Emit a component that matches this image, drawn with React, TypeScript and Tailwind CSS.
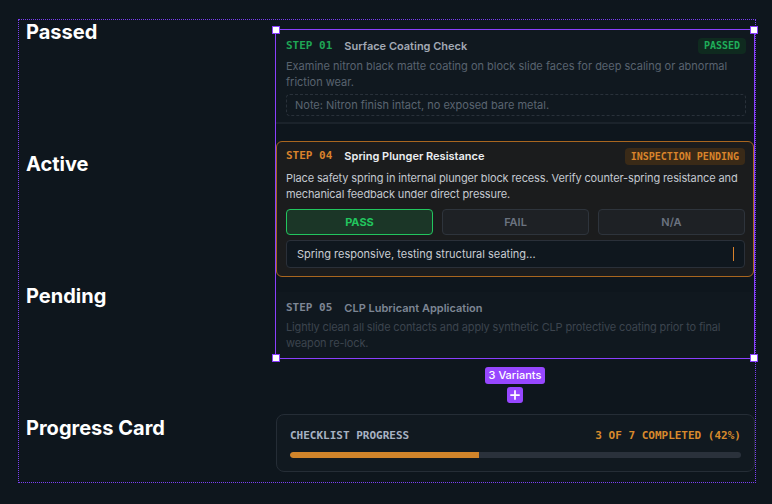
import { Plus } from "lucide-react"

const sans = "font-['Inter',sans-serif]"
const mono = "font-['DejaVu_Sans_Mono',monospace]"

function Handle({ className }: { className: string }) {
  return <span className={`absolute w-[8px] h-[8px] bg-white border border-[#8a3ffc] ${className}`} />
}

function PassedStep() {
  return (
    <div className="pl-2.5 pr-2 pt-2 pb-[6px] border-b-2 border-[#1b232b] bg-[#10181f]">
      <div className="h-4 flex items-center">
        <span className={`${mono} text-[11px] font-bold text-[#1fa655]`}>STEP 01</span>
        <span className="ml-3 text-[11px] font-semibold text-[#a3aab5]">Surface Coating Check</span>
        <span className={`ml-auto ${mono} text-[10px] font-bold text-[#1fae5a] bg-[#0f2a1f] rounded px-1.5 leading-4`}>
          PASSED
        </span>
      </div>
      <p className="mt-1 text-[11px] leading-4 text-[#59636f]">
        Examine nitron black matte coating on block slide faces for deep scaling or abnormal friction wear.
      </p>
      <div className="mt-1 h-[22px] flex items-center px-2 border border-dashed border-[#29313a] rounded text-[11px] text-[#5b6571]">
        Note: Nitron finish intact, no exposed bare metal.
      </div>
    </div>
  )
}

function ActiveStep() {
  return (
    <div className="mt-[17px] border border-[#a9661f] rounded-md bg-[#1b1c1d] pl-[9px] pr-2 pt-[6px] pb-2">
      <div className="h-[17px] flex items-center">
        <span className={`${mono} text-[11px] font-bold text-[#d9822b]`}>STEP 04</span>
        <span className="ml-3 text-[11px] font-semibold text-[#eceef1]">Spring Plunger Resistance</span>
        <span
          className={`ml-auto ${mono} text-[10px] font-bold text-[#d9842b] bg-[#3a2a17] rounded px-1.5 h-[17px] flex items-center`}
        >
          INSPECTION PENDING
        </span>
      </div>
      <p className="mt-[5px] text-[11px] leading-4 tracking-[-0.12px] text-[#c4c9d0]">
        Place safety spring in internal plunger block recess. Verify counter-spring resistance and mechanical feedback
        under direct pressure.
      </p>
      <div className="mt-[7px] grid grid-cols-3 gap-[9px]">
        <button className="h-[26px] rounded border border-[#22c55e] bg-[#1b3627] text-[11px] font-bold text-[#22c55e]">
          PASS
        </button>
        <button className="h-[26px] rounded border border-[#2e343c] bg-[#1e2125] text-[11px] font-semibold text-[#6b7380]">
          FAIL
        </button>
        <button className="h-[26px] rounded border border-[#2e343c] bg-[#1e2125] text-[11px] font-semibold text-[#6b7380]">
          N/A
        </button>
      </div>
      <div className="mt-[5px] h-[28px] flex items-center justify-between pl-2.5 pr-2.5 rounded border border-[#2a3039] bg-[#0f171e]">
        <span className="text-[11px] text-[#c9cdd3]">Spring responsive, testing structural seating...</span>
        <span className="w-px h-[14px] bg-[#d9822b]" />
      </div>
    </div>
  )
}

function PendingStep() {
  return (
    <div className="mt-[15px] pl-2.5 pr-2 pt-2 pb-[7px] bg-[#10181f]">
      <div className="h-4 flex items-center">
        <span className={`${mono} text-[11px] font-bold text-[#7d8694]`}>STEP 05</span>
        <span className="ml-3 text-[11px] font-semibold text-[#7d8694]">CLP Lubricant Application</span>
      </div>
      <p className="mt-[3px] text-[11px] leading-4 tracking-[-0.15px] text-[#3c444e]">
        Lightly clean all slide contacts and apply synthetic CLP protective coating prior to final weapon re-lock.
      </p>
    </div>
  )
}

export default function App() {
  const done = 3
  const total = 7
  const pct = Math.floor((done / total) * 100)

  return (
    <div className={`w-[772px] h-[504px] overflow-hidden bg-[#0e161d] pl-[18px] pt-[19px] ${sans}`}>
      <div className="w-[738px] h-[464px] border border-dotted border-[#7b3ff0] flex">
        {/* variant labels */}
        <div className="w-[256px] pl-[7px] -mt-0.5 flex flex-col">
          {["Passed", "Active", "Pending"].map((label) => (
            <div key={label} className="h-[132px] text-[20px] leading-7 font-bold text-white">
              {label}
            </div>
          ))}
          <div className="text-[20px] leading-7 font-bold text-white">Progress Card</div>
        </div>

        <div className="flex-1 flex flex-col pt-[9px]">
          {/* component set */}
          <div className="relative border border-[#8a3ffc]">
            <PassedStep />
            <ActiveStep />
            <PendingStep />
            <Handle className="-top-[4px] -left-[4px]" />
            <Handle className="-top-[4px] -right-[4px]" />
            <Handle className="-bottom-[4px] -left-[4px]" />
            <Handle className="-bottom-[4px] -right-[4px]" />
          </div>

          <div className="mt-2 flex flex-col items-center">
            <span className="h-[17px] px-1 flex items-center rounded-[3px] bg-[#9747ff] text-[11px] font-medium text-white">
              3 Variants
            </span>
            <span className="mt-[3px] w-4 h-4 rounded-[3px] bg-[#9747ff] flex items-center justify-center">
              <Plus className="w-3.5 h-3.5 text-white" strokeWidth={3} />
            </span>
          </div>

          {/* progress card */}
          <div className="mt-[11px] ml-px h-[58px] rounded-lg border border-[#252d36] bg-[#111920] px-[13px] pt-[13px]">
            <div className={`flex justify-between ${mono} text-[11px] leading-4 font-bold`}>
              <span className="text-[#a7b2c3]">CHECKLIST PROGRESS</span>
              <span className="text-[#d88a2c]">
                {done} OF {total} COMPLETED ({pct}%)
              </span>
            </div>
            <div className="mt-2 h-[6px] rounded-full bg-[#2a313b] overflow-hidden">
              <div className="h-full bg-[#d0842a] rounded-l-full" style={{ width: `${pct}%` }} />
            </div>
          </div>
        </div>
      </div>
    </div>
  )
}
